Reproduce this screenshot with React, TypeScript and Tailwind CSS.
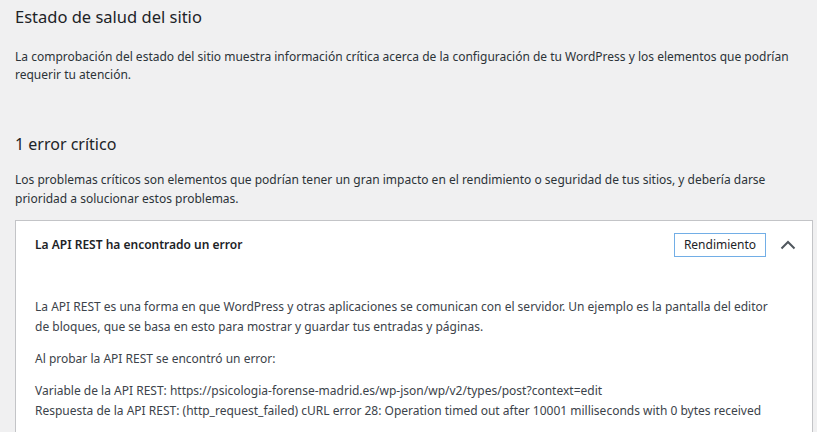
import React from "react";

const FONT = { fontFamily: '"Noto Sans", "Segoe UI", sans-serif' };

function ChevronUp(): React.JSX.Element {
  return (
    <svg width="16" height="10" viewBox="0 0 16 10" fill="none" aria-hidden="true">
      <path d="M1.5 8.5 L8 2 L14.5 8.5" stroke="#50575e" strokeWidth="2" />
    </svg>
  );
}

export default function App(): React.JSX.Element {
  return (
    <div className="min-h-[432px] w-full bg-[#f0f0f1] pl-[15px] pr-[4px] text-[#1d2327]" style={FONT}>
      <h1 className="pt-[4px] text-[16.5px] leading-[26px] font-normal">Estado de salud del sitio</h1>

      <p className="mt-[18px] text-[12px] leading-[18px] text-[#2c3338]">
        La comprobación del estado del sitio muestra información crítica acerca de la configuración de tu WordPress y
        los elementos que podrían requerir tu atención.
      </p>

      <h3 className="mt-[48px] text-[16px] leading-[24px] font-normal">1 error crítico</h3>

      <p className="mt-[14px] text-[12px] leading-[19px] text-[#2c3338]">
        Los problemas críticos son elementos que podrían tener un gran impacto en el rendimiento o seguridad de tus
        sitios, y debería darse prioridad a solucionar estos problemas.
      </p>

      <div className="mt-[12px] border border-[#c3c4c7] bg-white">
        <div className="flex items-center justify-between pt-[12px] pb-[14px] pl-[19px] pr-[16px]">
          <span className="text-[12px] font-semibold text-[#1d2327]">La API REST ha encontrado un error</span>
          <div className="flex items-center gap-[14px]">
            <span className="flex h-[24px] w-[92px] items-center justify-center border border-[#72aee6] text-[12px] text-[#1d2327]">
              Rendimiento
            </span>
            <ChevronUp />
          </div>
        </div>
        <div className="pl-[19px] pr-[36px] pt-[26px] pb-[14px] text-[12px] leading-[20px] text-[#3c434a]">
          <p>
            La API REST es una forma en que WordPress y otras aplicaciones se comunican con el servidor. Un ejemplo es la
            pantalla del editor de bloques, que se basa en esto para mostrar y guardar tus entradas y páginas.
          </p>
          <p className="mt-[12px]">Al probar la API REST se encontró un error:</p>
          <p className="mt-[12px] whitespace-nowrap">
            Variable de la API REST: https://psicologia-forense-madrid.es/wp-json/wp/v2/types/post?context=edit
            <br />
            Respuesta de la API REST: (http_request_failed) cURL error 28: Operation timed out after 10001 milliseconds
            with 0 bytes received
          </p>
        </div>
      </div>
    </div>
  );
}
